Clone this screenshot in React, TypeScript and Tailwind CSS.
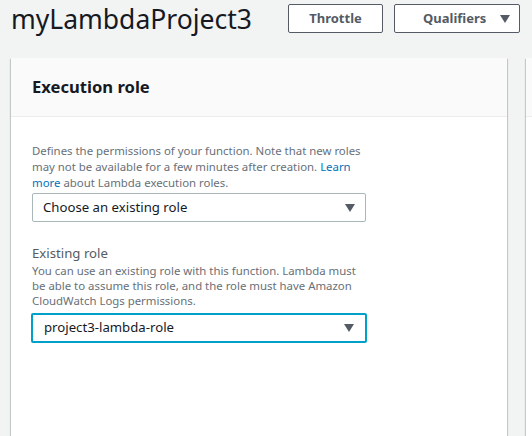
import React from "react";

function Caret() {
  return (
    <svg width="10" height="8" viewBox="0 0 10 8" className="shrink-0">
      <path d="M0 0 H10 L5 8 Z" fill="#545b64" />
    </svg>
  );
}

function Select({ value, focused }: { value: string; focused?: boolean }) {
  return (
    <div
      className={
        focused
          ? "flex h-[30px] w-[336px] items-center justify-between rounded-[2px] border-2 border-[#00a1c9] bg-white pl-[11px] pr-[11px]"
          : "flex h-[29px] w-[334px] items-center justify-between rounded-[2px] border border-[#aab7b8] bg-white pl-[10px] pr-[10px]"
      }
    >
      <span className="text-[13.2px] leading-none text-[#16191f]">{value}</span>
      <Caret />
    </div>
  );
}

export default function App() {
  return (
    <div
      className="h-[436px] w-[532px] overflow-hidden bg-[#f2f3f3]"
      style={{ fontFamily: '"Noto Sans", "Open Sans", sans-serif' }}
    >
      <div className="flex h-[58px] items-start">
        <h1 className="ml-[11px] mt-[1px] text-[26.5px] leading-[36px] text-[#16191f]">myLambdaProject3</h1>
        <div className="ml-auto mr-[12px] mt-[4px] flex gap-[11px]">
          <button className="flex h-[29px] w-[95px] items-center justify-center rounded-[2px] border border-[#545b64] bg-white text-[13px] font-bold text-[#545b64]">
            Throttle
          </button>
          <button className="flex h-[29px] w-[126px] items-center justify-between rounded-[2px] border border-[#545b64] bg-white pl-[28px] pr-[9px] text-[13px] font-bold text-[#545b64]">
            Qualifiers
            <Caret />
          </button>
        </div>
      </div>
      <div className="flex gap-[19px]">
        <div className="ml-[11px] h-[400px] w-[496px] shrink-0 bg-white shadow-[0_1px_1px_0_rgba(0,28,36,0.3),1px_1px_1px_0_rgba(0,28,36,0.15),-1px_1px_1px_0_rgba(0,28,36,0.15)]">
          <div className="flex h-[59px] items-center border-b border-[#eaeded] bg-[#fafafa] pl-[21px]">
            <h2 className="text-[16.6px] font-bold text-[#16191f]">Execution role</h2>
          </div>
          <div className="pl-[21px] pt-[26px]">
            <p className="w-[336px] text-[11.4px] leading-[16px] text-[#687078]">
              Defines the permissions of your function. Note that new roles may not be available for a few minutes after creation.{" "}
              <span className="text-[#0073bb]">Learn</span> <span className="text-[#0073bb]">more</span> about Lambda execution roles.
            </p>
            <div className="mt-[2px]">
              <Select value="Choose an existing role" />
            </div>
            <div className="mt-[21px] text-[13.2px] leading-[20px] text-[#545b64]">Existing role</div>
            <p className="w-[336px] text-[11.4px] leading-[15px] text-[#687078]">
              You can use an existing role with this function. Lambda must be able to assume this role, and the role must have Amazon CloudWatch Logs permissions.
            </p>
            <div className="ml-[-1px] mt-[5px]">
              <Select value="project3-lambda-role" focused />
            </div>
          </div>
        </div>
        <div className="h-[400px] w-[100px] shrink-0 bg-white shadow-[0_1px_1px_0_rgba(0,28,36,0.3),-1px_1px_1px_0_rgba(0,28,36,0.15)]">
          <div className="h-[59px] border-b border-[#eaeded] bg-[#fafafa]" />
        </div>
      </div>
    </div>
  );
}
